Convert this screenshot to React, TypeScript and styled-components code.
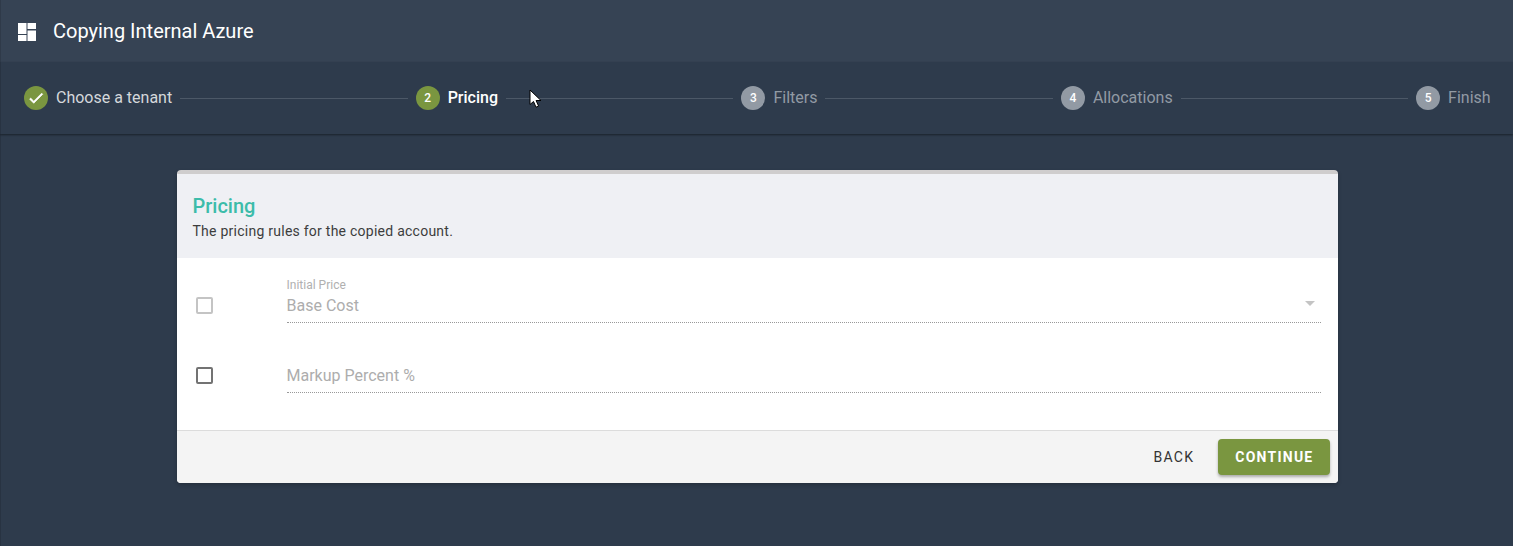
import React from 'react';
import styled, { createGlobalStyle } from 'styled-components';

const GlobalStyle = createGlobalStyle`
  html, body {
    margin: 0;
    height: 100%;
    background: #2e3b4c;
    font-family: Roboto, "Liberation Sans", sans-serif;
    overflow: hidden;
  }
`;

const Page = styled.div`
  position: relative;
  width: 1513px;
  height: 546px;
  background: #2e3b4c;

  &::after {
    content: '';
    position: absolute;
    left: 0;
    top: 0;
    bottom: 0;
    width: 1px;
    background: rgba(0, 0, 0, 0.12);
  }
`;

const TopBar = styled.header`
  display: flex;
  align-items: center;
  height: 62px;
  padding: 0 18px;
  box-sizing: border-box;
  background: #364354;
  color: #fff;
`;

const AppIcon = styled.svg`
  width: 18px;
  height: 18px;
  margin: 1px 17px 0 0;
  fill: #fff;
`;

const AppTitle = styled.div`
  font-size: 20px;
  font-weight: 400;
  line-height: 24px;
  margin-top: -1px;
`;

const Stepper = styled.nav`
  display: flex;
  align-items: center;
  height: 72px;
  padding: 0 22.4px 0 24px;
  box-sizing: border-box;
  background: #2e3b4c;
  box-shadow: 0 1px 2px rgba(0, 0, 0, 0.45);
`;

const Step = styled.div`
  display: flex;
  align-items: center;
  gap: 8px;
`;

const Bubble = styled.span<{ $on: boolean }>`
  display: flex;
  align-items: center;
  justify-content: center;
  width: 24px;
  height: 24px;
  border-radius: 50%;
  background: ${({ $on }) => ($on ? '#7a9640' : '#929aa4')};
  color: #fff;
  font-size: 12px;
  font-weight: 500;
`;

const StepLabel = styled.span<{ $tone: 'done' | 'active' | 'idle' }>`
  font-size: 16px;
  line-height: 20px;
  margin-top: -1px;
  font-weight: ${({ $tone }) => ($tone === 'active' ? 500 : 400)};
  color: ${({ $tone }) =>
    $tone === 'active' ? '#ffffff' : $tone === 'done' ? '#d5d8db' : '#929aa4'};
`;

const Line = styled.div`
  flex: 1;
  height: 1px;
  margin: 1px 8px 0 8px;
  background: #4c5867;
`;

const Content = styled.main`
  display: flex;
  justify-content: center;
  padding: 36px 0 0 1px;
`;

const Card = styled.section`
  width: 1161px;
  border-top: 4px solid #cfcdcd;
  border-radius: 4px;
  overflow: hidden;
  background: #fff;
  box-shadow: 0 2px 4px rgba(0, 0, 0, 0.2);
`;

const CardHeader = styled.div`
  height: 84px;
  padding: 20px 16px 0;
  box-sizing: border-box;
  background: #eff0f4;
`;

const CardTitle = styled.h2`
  margin: 0;
  font-size: 20px;
  line-height: 25px;
  font-weight: 500;
  color: #3cbcaa;
`;

const CardSubtitle = styled.p`
  margin: 2px 0 0;
  font-size: 14px;
  line-height: 20px;
  letter-spacing: 0.25px;
  color: #3d3d3d;
`;

const CardBody = styled.div`
  height: 172px;
  padding: 19px 17px 0 19px;
  box-sizing: border-box;
`;

const FieldRow = styled.div`
  display: flex;
  align-items: center;
  height: 46px;
  margin-bottom: 24px;
`;

const CheckBox = styled.span<{ $off?: boolean }>`
  flex: none;
  width: 17px;
  height: 17px;
  box-sizing: border-box;
  margin: 11px 74px 0 0;
  border: 2px solid ${({ $off }) => ($off ? '#c4c4c4' : '#737373')};
  border-radius: 2px;
`;

const Field = styled.div`
  position: relative;
  flex: 1;
  height: 46px;
  box-sizing: border-box;
  padding-top: 19px;
  border-bottom: 1px dotted #999;
`;

const FloatLabel = styled.label`
  position: absolute;
  left: 0;
  top: 1px;
  font-size: 12px;
  line-height: 14px;
  color: #b0b0b0;
`;

const FieldValue = styled.div`
  font-size: 16px;
  line-height: 20px;
  color: #adadad;
`;

const Caret = styled.span`
  position: absolute;
  right: 6px;
  top: 24px;
  width: 0;
  height: 0;
  border-left: 5px solid transparent;
  border-right: 5px solid transparent;
  border-top: 5px solid #c4c4c4;
`;

const CardFooter = styled.div`
  display: flex;
  align-items: center;
  justify-content: flex-end;
  gap: 8px;
  height: 53px;
  padding: 0 8px;
  box-sizing: border-box;
  border-top: 1px solid #dcdcdc;
  background: #f4f4f4;
`;

const Button = styled.button<{ $primary?: boolean }>`
  height: 36px;
  padding: 0 16px 0 17px;
  border: 0;
  border-radius: 4px;
  font-family: inherit;
  font-size: 14px;
  font-weight: ${({ $primary }) => ($primary ? 700 : 400)};
  letter-spacing: 1.25px;
  text-transform: uppercase;
  color: ${({ $primary }) => ($primary ? '#fff' : '#333')};
  background: ${({ $primary }) => ($primary ? '#7a9640' : 'transparent')};
  box-shadow: ${({ $primary }) => ($primary ? '0 2px 3px rgba(0, 0, 0, 0.3)' : 'none')};
`;

const Cursor = styled.svg`
  position: absolute;
  left: 529px;
  top: 89px;
  width: 14px;
  height: 20px;
`;

const steps = [
  { label: 'Choose a tenant', tone: 'done' },
  { label: 'Pricing', tone: 'active' },
  { label: 'Filters', tone: 'idle' },
  { label: 'Allocations', tone: 'idle' },
  { label: 'Finish', tone: 'idle' },
] as const;

const App = () => (
  <Page>
    <GlobalStyle />
    <TopBar>
      <AppIcon viewBox="0 0 18 18">
        <path d="M0 0h8.5v11H0zM0 12h8.5v6H0zM9.5 0H18v6H9.5zM9.5 7.5H18V18H9.5z" />
      </AppIcon>
      <AppTitle>Copying Internal Azure</AppTitle>
    </TopBar>
    <Stepper>
      {steps.map((step, i) => (
        <React.Fragment key={step.label}>
          <Step>
            <Bubble $on={step.tone !== 'idle'}>
              {step.tone === 'done' ? (
                <svg width="18" height="18" viewBox="0 0 24 24" fill="#fff" stroke="#fff" strokeWidth="0.9">
                  <path d="M21 7 9 19l-5.5-5.5 1.41-1.41L9 16.17 19.59 5.59 21 7z" />
                </svg>
              ) : (
                i + 1
              )}
            </Bubble>
            <StepLabel $tone={step.tone}>{step.label}</StepLabel>
          </Step>
          {i < steps.length - 1 && <Line />}
        </React.Fragment>
      ))}
    </Stepper>
    <Content>
      <Card>
        <CardHeader>
          <CardTitle>Pricing</CardTitle>
          <CardSubtitle>The pricing rules for the copied account.</CardSubtitle>
        </CardHeader>
        <CardBody>
          <FieldRow>
            <CheckBox $off />
            <Field>
              <FloatLabel>Initial Price</FloatLabel>
              <FieldValue>Base Cost</FieldValue>
              <Caret />
            </Field>
          </FieldRow>
          <FieldRow>
            <CheckBox />
            <Field>
              <FieldValue>Markup Percent %</FieldValue>
            </Field>
          </FieldRow>
        </CardBody>
        <CardFooter>
          <Button>Back</Button>
          <Button $primary>Continue</Button>
        </CardFooter>
      </Card>
    </Content>
    <Cursor viewBox="0 0 14 20">
      <path d="M1 1v14.5l3.5-3 2.5 5.7 2.6-1.1-2.5-5.6H12z" fill="#fff" stroke="#000" strokeWidth="1" />
    </Cursor>
  </Page>
);

export default App;
